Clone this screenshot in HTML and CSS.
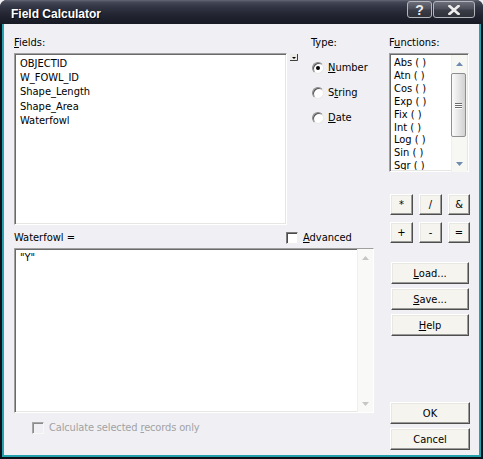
FILE: index.html
```html
<!DOCTYPE html>
<html>
<head>
<meta charset="utf-8">
<title>Field Calculator</title>
<link rel="stylesheet" href="styles.css">
</head>
<body>
<div class="window">
  <div class="titlebar">
    <span class="title">Field Calculator</span>
    <div class="caption">
      <span class="cbtn help">?</span>
      <span class="cbtn close"><svg width="12" height="10" viewBox="0 0 12 10"><path d="M1.5 1 L10.5 9 M10.5 1 L1.5 9" stroke="#ececec" stroke-width="2.6" stroke-linecap="square"/></svg></span>
    </div>
  </div>
  <div class="client">
    <div class="leftcol">
      <div class="toprow">
        <div class="fieldscol">
          <div class="label"><u>F</u>ields:</div>
          <div class="listrow">
            <div class="sunken fields">
              <div class="item">OBJECTID</div>
              <div class="item">W_FOWL_ID</div>
              <div class="item">Shape_Length</div>
              <div class="item">Shape_Area</div>
              <div class="item">Waterfowl</div>
            </div>
            <span class="grip"><svg width="8" height="7" viewBox="0 0 8 7"><rect x="0" y="0" width="8" height="7" fill="#ecebe6"/><path d="M7.5 0 V6.5 H0" stroke="#404040" fill="none"/><path d="M2 3 H6 L4 5 Z" fill="#000"/></svg></span>
          </div>
        </div>
        <div class="typecol">
          <div class="label">Type:</div>
          <div class="radios">
            <div class="opt"><span class="rb on"></span><span><u>N</u>umber</span></div>
            <div class="opt"><span class="rb"></span><span>S<u>t</u>ring</span></div>
            <div class="opt"><span class="rb"></span><span><u>D</u>ate</span></div>
          </div>
        </div>
      </div>
      <div class="exprhead">
        <span>Waterfowl =</span>
        <div class="opt"><span class="cb"></span><span><u>A</u>dvanced</span></div>
      </div>
      <div class="sunken expr">
        <div class="exprtext">"Y"</div>
        <div class="vscroll off">
          <div class="sbbtn"><svg width="7" height="4" viewBox="0 0 7 4"><path d="M0 4 L3.5 0 L7 4 Z" fill="#c6c6c6"/></svg></div>
          <div class="track"></div>
          <div class="sbbtn"><svg width="7" height="4" viewBox="0 0 7 4"><path d="M0 0 L3.5 4 L7 0 Z" fill="#c6c6c6"/></svg></div>
        </div>
      </div>
      <div class="opt calc"><span class="cb dis"></span><span>Calculate selected <u>r</u>ecords only</span></div>
    </div>
    <div class="rightcol">
      <div class="label">F<u>u</u>nctions:</div>
      <div class="sunken funcs">
        <div class="fitems">
          <div>Abs ( )</div>
          <div>Atn ( )</div>
          <div>Cos ( )</div>
          <div>Exp ( )</div>
          <div>Fix ( )</div>
          <div>Int ( )</div>
          <div>Log ( )</div>
          <div>Sin ( )</div>
          <div>Sqr ( )</div>
        </div>
        <div class="vscroll">
          <div class="sbbtn"><svg width="7" height="4" viewBox="0 0 7 4"><path d="M0 4 L3.5 0 L7 4 Z" fill="#6f8cb0"/></svg></div>
          <div class="track"><div class="thumb"><span class="gripline"></span><span class="gripline"></span><span class="gripline"></span></div></div>
          <div class="sbbtn"><svg width="7" height="4" viewBox="0 0 7 4"><path d="M0 0 L3.5 4 L7 0 Z" fill="#6f8cb0"/></svg></div>
        </div>
      </div>
      <div class="ops">
        <span class="btn">*</span>
        <span class="btn">/</span>
        <span class="btn">&amp;</span>
        <span class="btn">+</span>
        <span class="btn">-</span>
        <span class="btn">=</span>
      </div>
      <div class="stack side">
        <span class="btn"><u>L</u>oad...</span>
        <span class="btn"><u>S</u>ave...</span>
        <span class="btn"><u>H</u>elp</span>
      </div>
      <div class="stack okc">
        <span class="btn">OK</span>
        <span class="btn">Cancel</span>
      </div>
    </div>
  </div>
</div>
</body>
</html>
```

FILE: styles.css
```css
* { box-sizing: border-box; }
html, body { margin: 0; padding: 0; background: #f0f0f4; }
body {
  font-family: "DejaVu Sans Condensed", "DejaVu Sans", "Liberation Sans", sans-serif;
  font-size: 11px;
  color: #000;
}
u { text-decoration: underline; text-underline-offset: 1px; }

.window {
  width: 483px;
  height: 459px;
  background: #0e1019;
  display: flex;
  flex-direction: column;
  border-radius: 7px 7px 0 0;
  overflow: hidden;
}

.titlebar {
  height: 24px;
  flex: none;
  display: flex;
  justify-content: space-between;
  align-items: flex-start;
  padding-left: 11px;
  background: linear-gradient(#666a77 0px, #454857 2px, #323543 7px, #242634 14px, #1c1e2a 20px, #171923 24px);
}
.title {
  font-family: "Liberation Sans", Arial, sans-serif;
  font-weight: bold;
  font-size: 12px;
  color: #fff;
  line-height: 14px;
  padding-top: 7px;
  text-shadow: 1px 1px 0 #0a0b10;
}
.caption {
  display: flex;
  gap: 1px;
  margin: 1px 8px 0 0;
}
.cbtn {
  height: 17px;
  border: 1px solid #b4b6bc;
  border-radius: 3px;
  background: linear-gradient(#6c6f79, #4c4f59 45%, #3a3c46 55%, #2f313a);
  color: #ececec;
  font-family: "Liberation Sans", Arial, sans-serif;
  font-weight: bold;
  font-size: 14px;
  display: flex;
  align-items: center;
  justify-content: center;
}
.help { width: 25px; }
.close { width: 42px; }

.client {
  flex: 1;
  margin: 0 2px 2px 2px;
  border: 2px solid #25a1ae;
  border-top: none;
  background: #f0f0f4;
  display: flex;
  gap: 15px;
  padding: 12px 0 0 10px;
}

.label { line-height: 13px; height: 13px; white-space: nowrap; }

.sunken {
  background: #fff;
  border: 1px solid;
  border-color: #a0a0a0 #ffffff #ffffff #a0a0a0;
  box-shadow: inset 1px 1px 0 #6a6a6a, inset -1px -1px 0 #e6e6e2;
}

.leftcol { width: 360px; display: flex; flex-direction: column; }
.toprow { display: flex; height: 189px; }
.fieldscol { display: flex; flex-direction: column; }
.listrow { display: flex; margin-top: 4px; align-items: flex-start; }
.fields {
  width: 273px;
  height: 172px;
  padding: 3px 0 0 5px;
}
.item { line-height: 14.2px; white-space: nowrap; }
.grip { margin: 1px 0 0 3px; width: 8px; height: 7px; display: block; line-height: 0; }

.typecol { margin-left: 13px; display: flex; flex-direction: column; }
.radios { display: flex; flex-direction: column; gap: 12px; margin-top: 12px; padding-left: 1px; }
.opt { display: flex; align-items: center; gap: 4px; height: 13px; line-height: 13px; white-space: nowrap; }
.rb {
  width: 12px; height: 12px;
  border-radius: 50%;
  background: #fff;
  border: 1px solid;
  border-color: #8a8a8a #e8e8e8 #e8e8e8 #8a8a8a;
  box-shadow: inset 1px 1px 0 #555;
  position: relative;
  flex: none;
}
.rb.on::after {
  content: "";
  position: absolute;
  left: 3px; top: 3px;
  width: 4px; height: 4px;
  border-radius: 50%;
  background: #000;
}

.exprhead {
  display: grid;
  grid-template-columns: 272px auto;
  align-items: center;
  height: 13px;
  line-height: 13px;
  margin-top: 6px;
}
.exprhead .opt { gap: 5px; }
.cb {
  width: 12px; height: 12px;
  background: #fff;
  border: 1px solid;
  border-color: #7c7c7c #f0f0f0 #f0f0f0 #7c7c7c;
  box-shadow: inset 1px 1px 0 #4a4a4a;
  flex: none;
}
.cb.dis {
  background: #f0f0f4;
  border-color: #a6a6a6 #f8f8f8 #f8f8f8 #a6a6a6;
  box-shadow: inset 1px 1px 0 #8a8a8a;
}

.expr {
  margin-top: 4px;
  width: 360px;
  height: 165px;
  display: flex;
}
.exprtext { flex: 1; padding: 2px 0 0 5px; line-height: 13px; }

.vscroll {
  width: 16px;
  display: flex;
  flex-direction: column;
  background: #f7f7f4;
  border-left: 1px solid #efefeb;
}
.sbbtn { height: 17px; flex: none; display: flex; align-items: center; justify-content: center; }
.track { flex: 1; }
.vscroll.off { background: #f9f9f7; }

.calc { margin: 8px 0 0 18px; color: #a2a2a2; gap: 5px; letter-spacing: -0.15px; }

.rightcol { width: 81px; display: flex; flex-direction: column; }
.funcs {
  margin-top: 4px;
  width: 80px;
  height: 119px;
  display: flex;
  padding: 1px;
}
.fitems { flex: 1; padding: 2px 0 0 3px; overflow: hidden; }
.fitems div { line-height: 12.9px; white-space: nowrap; }
.funcs .vscroll { height: 117px; }
.funcs .track { padding-top: 1px; }
.thumb {
  width: 15px;
  height: 64px;
  margin-left: -1px;
  border: 1px solid #8e8f90;
  border-radius: 2px;
  background: linear-gradient(to right, #fbfbfb, #e8e8e8 45%, #d2d2d2);
  display: flex;
  flex-direction: column;
  align-items: center;
  justify-content: center;
  gap: 1px;
}
.gripline { display: block; width: 7px; height: 1px; background: #6b6b6b; box-shadow: 0 1px 0 #fff; }

.btn {
  display: flex;
  align-items: center;
  justify-content: center;
  background: #f5f4ef;
  border: 1px solid;
  border-color: #ffffff #4e4e4e #4e4e4e #ffffff;
  box-shadow: inset -1px -1px 0 #9a9a96, inset 1px 1px 0 #e8e7e1;
  line-height: 13px;
  white-space: nowrap;
}
.ops {
  margin: 22px 0 0 1px;
  display: grid;
  grid-template-columns: 23px 23px 22px;
  grid-template-rows: 21px 21px;
  column-gap: 6px;
  row-gap: 7px;
}
.stack { display: flex; flex-direction: column; gap: 4px; }
.stack .btn { height: 22px; }
.side { margin: 19px 0 0 2px; width: 78px; }
.okc { margin: 66px 0 0 1px; width: 80px; }
```
